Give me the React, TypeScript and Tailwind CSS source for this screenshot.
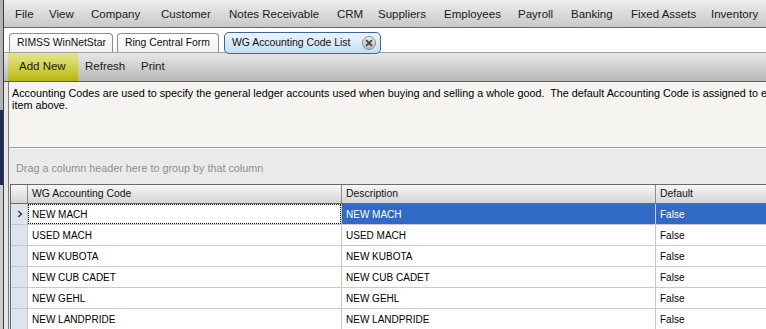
import React from "react";

const menu: [string, string][] = [
  ["File", "w-[34px]"],
  ["View", "w-[42px]"],
  ["Company", "w-[70px]"],
  ["Customer", "w-[68px]"],
  ["Notes Receivable", "w-[108px]"],
  ["CRM", "w-[41px]"],
  ["Suppliers", "w-[66px]"],
  ["Employees", "w-[74px]"],
  ["Payroll", "w-[53px]"],
  ["Banking", "w-[60px]"],
  ["Fixed Assets", "w-[80px]"],
  ["Inventory", "w-[55px]"],
];

const rows = [
  "NEW MACH",
  "USED MACH",
  "NEW KUBOTA",
  "NEW CUB CADET",
  "NEW GEHL",
  "NEW LANDPRIDE",
];

function CloseButton() {
  return (
    <svg width="14" height="14" viewBox="0 0 14 14" className="shrink-0">
      <defs>
        <linearGradient id="cb" x1="0" y1="0" x2="0" y2="1">
          <stop offset="0" stopColor="#f2f2f2" />
          <stop offset="1" stopColor="#b4b4b4" />
        </linearGradient>
      </defs>
      <circle cx="7" cy="7" r="6.5" fill="url(#cb)" stroke="#8c8c8c" strokeWidth="1" />
      <path d="M4.6 4.6 L9.4 9.4 M9.4 4.6 L4.6 9.4" stroke="#4a4a4a" strokeWidth="2" strokeLinecap="round" />
    </svg>
  );
}

function Chevron() {
  return (
    <svg width="6" height="8" viewBox="0 0 6 8">
      <path d="M1.2 1 L4.4 4 L1.2 7" fill="none" stroke="#474747" strokeWidth="1.7" />
    </svg>
  );
}

export default function App() {
  return (
    <div className="flex h-[329px] w-[766px] overflow-hidden bg-white font-['Liberation_Sans',Arial,sans-serif] text-black">
      {/* outer window edge */}
      <div className="flex w-[3px] shrink-0 flex-col">
        <div className="h-[110px] bg-[#b3b3b3]" />
        <div className="h-[75px] bg-[#1e2a57]" />
        <div className="flex-1 bg-[#cfcfcf]" />
      </div>
      <div className="w-px shrink-0 bg-[#3c3c3c]" />

      <div className="flex min-w-0 flex-1 flex-col">
        {/* menu bar */}
        <div className="flex h-[28px] shrink-0 items-center border-b border-[#6a6a6a] bg-linear-to-b from-[#eeeeee] to-[#c8c8c8] pl-[11px] pt-[2px] text-[11.5px] text-[#1a1a1a]">
          {menu.map(([label, w]) => (
            <div key={label} className={`${w} shrink-0 whitespace-nowrap`}>
              {label}
            </div>
          ))}
        </div>

        {/* tab strip */}
        <div className="flex h-[24px] shrink-0 items-start bg-white pl-[5px] text-[10.4px] text-[#111]">
          <div className="mt-[5px] flex h-[19px] w-[104px] shrink-0 items-center whitespace-nowrap rounded-t-[4px] border border-b-0 border-[#8e8e8e] bg-linear-to-b from-white to-[#f1f1f1] pl-[7px]">
            RIMSS WinNetStar
          </div>
          <div className="ml-[4px] mt-[5px] flex h-[19px] w-[102px] shrink-0 items-center whitespace-nowrap rounded-t-[4px] border border-b-0 border-[#8e8e8e] bg-linear-to-b from-white to-[#f1f1f1] pl-[7px]">
            Ring Central Form
          </div>
          <div className="relative z-10 ml-[5px] mt-[4px] flex h-[22px] w-[157px] shrink-0 items-center whitespace-nowrap rounded-[5px] border border-[#3d6399] bg-linear-to-b from-[#eaf5fd] to-[#c4def4] pl-[7px] pr-[4px]">
            <span className="flex-1">WG Accounting Code List</span>
            <CloseButton />
          </div>
        </div>

        {/* toolbar */}
        <div className="flex h-[30px] shrink-0 items-stretch border-y border-t-[#a3a3a3] border-b-[#5a5a5a] bg-linear-to-b from-[#e7e7e7] to-[#b8b8b8] pl-[4px] text-[11.5px] text-[#1a1a1a]">
          <div className="flex w-[70px] items-center bg-linear-to-b from-[#e4e48e] via-[#d2d246] to-[#b6b608] pl-[11px] whitespace-nowrap">
            Add New
          </div>
          <div className="flex w-[56px] items-center pl-[7px] whitespace-nowrap">Refresh</div>
          <div className="flex w-[50px] items-center pl-[7px] whitespace-nowrap">Print</div>
        </div>

        {/* lower content */}
        <div className="flex min-h-0 flex-1 bg-[#e6e6e6] pl-[4px]">
          <div className="flex min-w-0 flex-1 flex-col border-l border-[#7b7b7b]">
            <div className="h-[66px] shrink-0 overflow-hidden border-b border-[#9d9d9d] bg-[#f5f4f0] pl-[3px] pt-[5px] text-[10.8px] leading-[12px]">
              <div className="whitespace-nowrap">
                Accounting Codes are used to specify the general ledger accounts used when buying and selling a whole good.&nbsp; The default Accounting Code is assigned to each
              </div>
              <div className="whitespace-nowrap">item above.</div>
            </div>

            <div className="flex h-[36px] shrink-0 items-center border-t border-[#fafafa] bg-[#eaeaea] pl-[7px] pt-[3px] text-[10.8px] text-[#8f8f8f] whitespace-nowrap">
              Drag a column header here to group by that column
            </div>

            <div className="ml-[1px] flex min-h-0 flex-1 flex-col overflow-hidden border-l border-[#6a6a6a] bg-white">
              {/* header */}
              <div className="flex h-[20px] shrink-0 border-y border-[#6a6a6a] bg-linear-to-b from-[#f7f7f7] to-[#d4d4d4] text-[10.4px] text-[#111]">
                <div className="w-[17px] shrink-0 border-r border-[#8a8a8a]" />
                <div className="flex w-[314px] shrink-0 items-center border-r border-[#8a8a8a] pl-[4px] whitespace-nowrap">
                  WG Accounting Code
                </div>
                <div className="flex w-[314px] shrink-0 items-center border-r border-[#8a8a8a] pl-[4px] whitespace-nowrap">
                  Description
                </div>
                <div className="flex flex-1 items-center pl-[4px] whitespace-nowrap">Default</div>
              </div>

              {/* rows */}
              {rows.map((r, i) => {
                const sel = i === 0;
                return (
                  <div key={r} className="flex h-[21px] shrink-0 border-b border-[#c9c9c9] text-[10px]">
                    <div className="flex w-[17px] shrink-0 items-center justify-center border-r border-[#c9c9c9] bg-[#dee4ed] pl-[1px]">
                      {sel && <Chevron />}
                    </div>
                    <div className="w-[314px] shrink-0 border-r border-[#c9c9c9]">
                      {sel ? (
                        <div className="flex h-full items-center border border-dotted border-black pl-[3px] whitespace-nowrap">
                          {r}
                        </div>
                      ) : (
                        <div className="flex h-full items-center pl-[4px] whitespace-nowrap">{r}</div>
                      )}
                    </div>
                    <div
                      className={
                        sel
                          ? "flex w-[314px] shrink-0 items-center border-r border-[#c7d4ea] bg-[#316ac5] pl-[4px] text-white whitespace-nowrap"
                          : "flex w-[314px] shrink-0 items-center border-r border-[#c9c9c9] pl-[4px] whitespace-nowrap"
                      }
                    >
                      {r}
                    </div>
                    <div
                      className={
                        sel
                          ? "flex flex-1 items-center bg-[#316ac5] pl-[4px] text-white"
                          : "flex flex-1 items-center pl-[4px]"
                      }
                    >
                      False
                    </div>
                  </div>
                );
              })}
            </div>
          </div>
        </div>
      </div>
    </div>
  );
}
